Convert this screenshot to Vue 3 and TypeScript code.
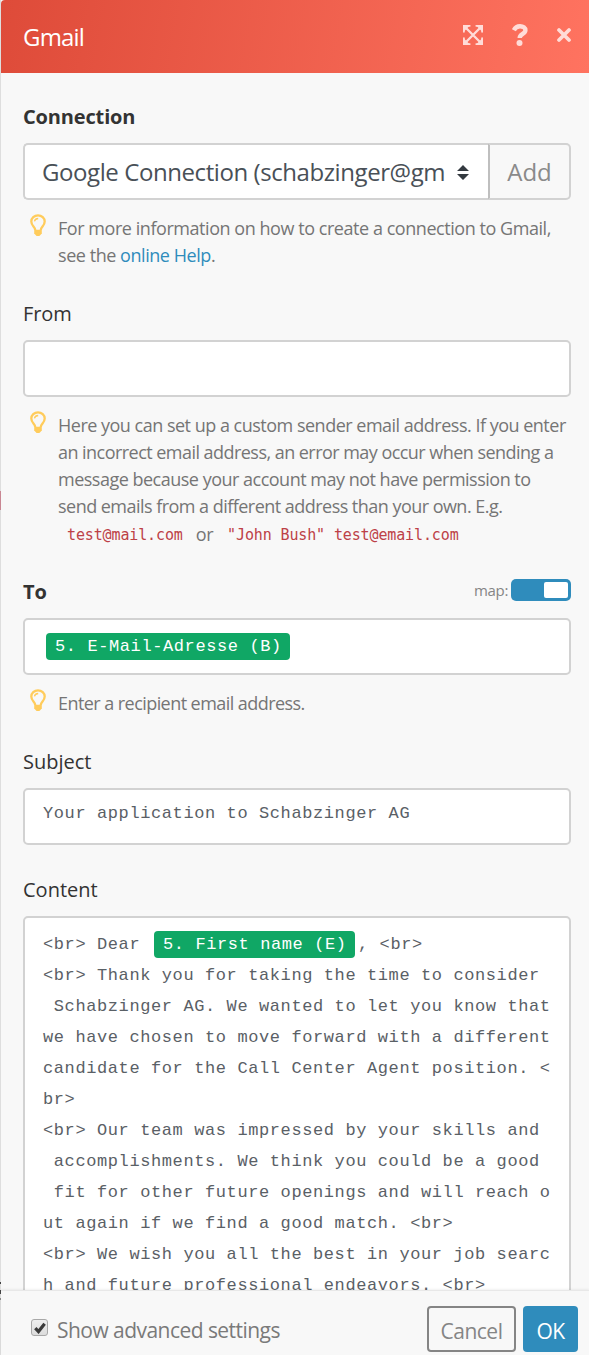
<script setup lang="ts">
import { ref } from 'vue'

interface HintLine {
  text: string
  fit: string
}

const fromHint: HintLine[] = [
  { text: 'Here you can set up a custom sender email address. If you enter', fit: 'a' },
  { text: 'an incorrect email address, an error may occur when sending a', fit: 'b' },
  { text: 'message because your account may not have permission to', fit: 'c' },
  { text: 'send emails from a different address than your own. E.g.', fit: 'd' },
]

const contentLines: string[] = [
  '<br> Thank you for taking the time to consider',
  ' Schabzinger AG. We wanted to let you know that',
  'we have chosen to move forward with a different',
  'candidate for the Call Center Agent position. <',
  'br>',
  '<br> Our team was impressed by your skills and',
  ' accomplishments. We think you could be a good',
  ' fit for other future openings and will reach o',
  'ut again if we find a good match. <br>',
  '<br> We wish you all the best in your job searc',
  'h and future professional endeavors. <br>',
]

const mapped = ref(true)
const advanced = ref(true)
</script>

<template>
  <div class="panel">
    <header class="head">
      <h1 class="title">Gmail</h1>
      <div class="tools">
        <svg class="i-expand" viewBox="0 0 20 20" width="20" height="20">
          <path d="M3 3 17 17M17 3 3 17" stroke="currentColor" stroke-width="2.3" />
          <path d="M0.9 7.4V0.9H7.4M12.6 0.9H19.1V7.4M19.1 12.6V19.1H12.6M7.4 19.1H0.9V12.6" fill="none" stroke="currentColor" stroke-width="1.8" />
          <path d="M0 0H7.4L0 7.4ZM20 0V7.4L12.6 0ZM0 20V12.6L7.4 20ZM20 20H12.6L20 12.6Z" fill="currentColor" />
        </svg>
        <svg class="i-help" viewBox="0 0 16 22" width="16" height="22">
          <path d="M1.8 6.2C3.2 3.4 5.2 2.2 8 2.2c3.2 0 5.4 1.6 5.4 4.1 0 3.8-5.7 3.5-5.7 7.8" fill="none" stroke="currentColor" stroke-width="4.4" />
          <circle cx="7.5" cy="18.9" r="3" fill="currentColor" />
        </svg>
        <svg class="i-close" viewBox="0 0 14 14" width="14" height="14">
          <path d="M2 2 12 12M12 2 2 12" stroke="currentColor" stroke-width="3.7" stroke-linecap="round" />
        </svg>
      </div>
    </header>

    <main class="body">
      <section class="field">
        <div class="label strong l-conn">Connection</div>
        <div class="group">
          <div class="box select">
            <span class="value">Google Connection (schabzinger@gm</span>
            <svg class="caret" viewBox="0 0 12 15" width="12" height="15">
              <path d="M6 0 12 6H0ZM6 15 0 9H12Z" fill="#343a40" />
            </svg>
          </div>
          <button class="add" type="button">Add</button>
        </div>
        <div class="hint">
          <svg class="bulb" viewBox="0 0 16 22" width="16" height="22">
            <path d="M5.2 16C5.2 12.8 1.3 11.9 1.3 7.5a6.7 6.2 0 0 1 13.4 0C14.7 11.9 10.8 12.8 10.8 16" fill="none" stroke="currentColor" stroke-width="2.3" />
            <path d="M4.5 7.4C4.7 5.6 6 4.7 8.2 4.5" fill="none" stroke="currentColor" stroke-width="1.3" />
            <path d="M4.2 15.8h7.6v3.7l-1.2 1.3-1.2 1.2H6.6l-1.2-1.2-1.2-1.3z" fill="currentColor" />
          </svg>
          <div>
            <div class="line h1">For more information on how to create a connection to Gmail,</div>
            <div class="line h2">see the <a class="link">online Help</a>.</div>
          </div>
        </div>
      </section>

      <section class="field">
        <div class="label l-from">From</div>
        <div class="box"></div>
        <div class="hint">
          <svg class="bulb" viewBox="0 0 16 22" width="16" height="22">
            <path d="M5.2 16C5.2 12.8 1.3 11.9 1.3 7.5a6.7 6.2 0 0 1 13.4 0C14.7 11.9 10.8 12.8 10.8 16" fill="none" stroke="currentColor" stroke-width="2.3" />
            <path d="M4.5 7.4C4.7 5.6 6 4.7 8.2 4.5" fill="none" stroke="currentColor" stroke-width="1.3" />
            <path d="M4.2 15.8h7.6v3.7l-1.2 1.3-1.2 1.2H6.6l-1.2-1.2-1.2-1.3z" fill="currentColor" />
          </svg>
          <div>
            <div v-for="l in fromHint" :key="l.fit" class="line" :class="'fit-' + l.fit">{{ l.text }}</div>
            <div class="line codes"><code>test@mail.com</code><span>or</span><code>"John Bush" test@email.com</code></div>
          </div>
        </div>
      </section>

      <section class="field">
        <div class="label strong l-to">
          <span>To</span>
          <span class="map">
            <span class="map-text">map:</span>
            <span class="switch" :class="{ on: mapped }" @click="mapped = !mapped"><i class="knob"></i></span>
          </span>
        </div>
        <div class="box mono to-box"><span class="chip">5. E-Mail-Adresse (B)</span></div>
        <div class="hint">
          <svg class="bulb" viewBox="0 0 16 22" width="16" height="22">
            <path d="M5.2 16C5.2 12.8 1.3 11.9 1.3 7.5a6.7 6.2 0 0 1 13.4 0C14.7 11.9 10.8 12.8 10.8 16" fill="none" stroke="currentColor" stroke-width="2.3" />
            <path d="M4.5 7.4C4.7 5.6 6 4.7 8.2 4.5" fill="none" stroke="currentColor" stroke-width="1.3" />
            <path d="M4.2 15.8h7.6v3.7l-1.2 1.3-1.2 1.2H6.6l-1.2-1.2-1.2-1.3z" fill="currentColor" />
          </svg>
          <div class="line h3">Enter a recipient email address.</div>
        </div>
      </section>

      <section class="field">
        <div class="label l-subj">Subject</div>
        <div class="box mono subject">Your application to Schabzinger AG</div>
      </section>

      <section class="field">
        <div class="label l-cont">Content</div>
        <div class="box mono content">
          <div class="row"><span>&lt;br&gt; Dear&nbsp;</span><span class="chip">5. First name (E)</span><span>, &lt;br&gt;</span></div>
          <div v-for="(t, i) in contentLines" :key="i" class="row">{{ t }}</div>
        </div>
      </section>
    </main>

    <footer class="foot">
      <span class="check" @click="advanced = !advanced">
        <svg v-if="advanced" viewBox="0 0 12 12" width="12" height="12">
          <path d="M1.3 6.2 4.5 9.6 10.6 1.8" fill="none" stroke="#3a3a3a" stroke-width="3.2" />
        </svg>
      </span>
      <span class="adv">Show advanced settings</span>
      <button class="btn cancel" type="button">Cancel</button>
      <button class="btn ok" type="button">OK</button>
    </footer>

    <i class="edge pink"></i>
    <i class="edge dark"></i>
  </div>
</template>

<style>
html,
body {
  margin: 0;
  background: #f8f8f8;
}
</style>

<style scoped>
.panel {
  position: relative;
  box-sizing: border-box;
  width: 589px;
  height: 1355px;
  display: flex;
  flex-direction: column;
  background: #f8f8f8;
  border-left: 1px solid #dedede;
  font-family: 'Open Sans', 'Noto Sans', sans-serif;
  color: #333;
}
.head {
  flex: none;
  height: 73px;
  box-sizing: border-box;
  display: flex;
  align-items: center;
  justify-content: space-between;
  padding: 0 18px 0 22px;
  border-top-left-radius: 4px;
  background: linear-gradient(100deg, #de4b39 0%, #ff7360 100%);
  color: #fff;
}
.title {
  margin: 0;
  font-size: 24px;
  font-weight: 400;
  letter-spacing: -0.8px;
}
.tools {
  display: flex;
  align-items: center;
  color: #ffdcd8;
  margin-top: -3px;
}
.i-help { margin-left: 29px; }
.i-close { margin-left: 29px; }
.body {
  flex: 1;
  min-height: 0;
  overflow: hidden;
  padding: 28px 18px 0 22px;
}
.field { margin-bottom: 29px; }
.label {
  height: 32px;
  line-height: 32px;
  margin-bottom: 10px;
  font-size: 20px;
  display: flex;
  justify-content: space-between;
  white-space: nowrap;
}
.strong { font-weight: 700; }
.l-conn { letter-spacing: -0.15px; }
.l-from { letter-spacing: -0.1px; }
.l-subj, .l-cont { letter-spacing: 0; }
.box {
  box-sizing: border-box;
  height: 57px;
  border: 2px solid #d2d2d2;
  border-radius: 5px;
  background: #fff;
}
.group { display: flex; }
.select {
  flex: 1;
  display: flex;
  align-items: center;
  justify-content: space-between;
  padding: 0 18px 0 17px;
  border-right: 0;
  border-radius: 5px 0 0 5px;
}
.value {
  font-size: 24px;
  color: #495057;
  letter-spacing: -0.42px;
  white-space: nowrap;
}
.caret { flex: none; margin: 1px 1px 0 0; }
.add {
  box-sizing: border-box;
  width: 83px;
  height: 57px;
  padding: 0;
  border: 2px solid #d2d2d2;
  border-left-color: #bfbfbf;
  border-radius: 0 5px 5px 0;
  background: #f8f8f8;
  font: 400 24px 'Open Sans', sans-serif;
  color: #8a8a8a;
}
.hint {
  margin-top: 15px;
  display: flex;
  color: #757575;
  font-size: 18px;
  line-height: 27px;
}
.bulb {
  flex: none;
  margin: -1px 12px 0 7px;
  color: #ffcc5c;
}
.line { height: 27px; white-space: nowrap; }
.h1 { letter-spacing: -0.45px; }
.h2 { letter-spacing: -0.45px; }
.h3 { letter-spacing: -0.56px; }
.fit-a { letter-spacing: -0.5px; }
.fit-b { letter-spacing: -0.54px; }
.fit-c { letter-spacing: -0.5px; }
.fit-d { letter-spacing: -0.53px; }
.link { color: #2f8cbc; }
.codes { display: flex; }
.codes code {
  font: 15px/31px 'DejaVu Sans Mono', monospace;
  letter-spacing: -0.13px;
  color: #bd4147;
  margin-left: 9px;
}
.codes span {
  margin-left: 13px;
  line-height: 28px;
  letter-spacing: -0.4px;
}
.codes span + code { margin-left: 14px; }
.map {
  display: flex;
  align-items: center;
  font-weight: 400;
  height: 28px;
}
.map-text {
  font-size: 15px;
  letter-spacing: -0.35px;
  color: #858585;
  margin-right: 3px;
}
.switch {
  box-sizing: border-box;
  width: 60px;
  height: 22px;
  padding: 3px;
  border-radius: 5px;
  background: #aaa;
  display: flex;
}
.switch.on {
  background: #2f8cbc;
  justify-content: flex-end;
}
.knob {
  width: 24px;
  height: 16px;
  border-radius: 2px;
  background: #fff;
}
.mono {
  font-family: 'Liberation Mono', monospace;
  font-size: 17px;
  letter-spacing: 0.598px;
  color: #5a6066;
  line-height: 31px;
  white-space: pre;
  padding: 11px 18px 0;
}
.chip {
  display: inline-block;
  height: 27px;
  line-height: 28px;
  padding: 0 8.4px 0 9px;
  margin: 0 3px;
  border-radius: 4px;
  background: #10a765;
  color: #fff;
}
.to-box {
  display: flex;
  padding-top: 13px;
}
.subject { padding-top: 8px; }
.content { height: 440px; }
.row {
  height: 31px;
  display: flex;
  align-items: center;
}
.foot {
  flex: none;
  box-sizing: border-box;
  height: 65px;
  border-top: 1px solid #e8e8e8;
  background: #f8f8f8;
  display: flex;
  align-items: flex-start;
  padding: 15px 11px 0 30px;
  box-shadow: 0 -1px 2px rgba(0, 0, 0, 0.06);
  position: relative;
}
.check {
  box-sizing: border-box;
  width: 17px;
  height: 17px;
  margin-top: 13px;
  border: 1px solid #a8a8a8;
  border-radius: 3px;
  background: linear-gradient(#eee, #dcdcdc);
  display: flex;
  align-items: center;
  justify-content: center;
}
.adv {
  flex: 1;
  margin-left: 9px;
  line-height: 49px;
  font-size: 21px;
  color: #7a7a7a;
  letter-spacing: -0.54px;
  white-space: nowrap;
}
.btn {
  box-sizing: border-box;
  height: 46px;
  padding: 3px 0 0;
  border-radius: 4px;
  font: 400 21px 'Open Sans', sans-serif;
  letter-spacing: -0.5px;
}
.cancel {
  width: 89px;
  border: 2px solid #858585;
  background: transparent;
  color: #858585;
}
.ok {
  width: 55px;
  margin-left: 7px;
  border: 0;
  background: #2f8cbc;
  color: #fff;
}
.edge {
  position: absolute;
  left: -1px;
  width: 1px;
}
.pink { top: 491px; height: 19px; background: #c98793; }
.dark {
  top: 1282px;
  height: 18px;
  background: linear-gradient(#444 0 2px, #ddd 2px 8px, #444 8px 12px, #ddd 12px 16px, #888 16px);
}
</style>
